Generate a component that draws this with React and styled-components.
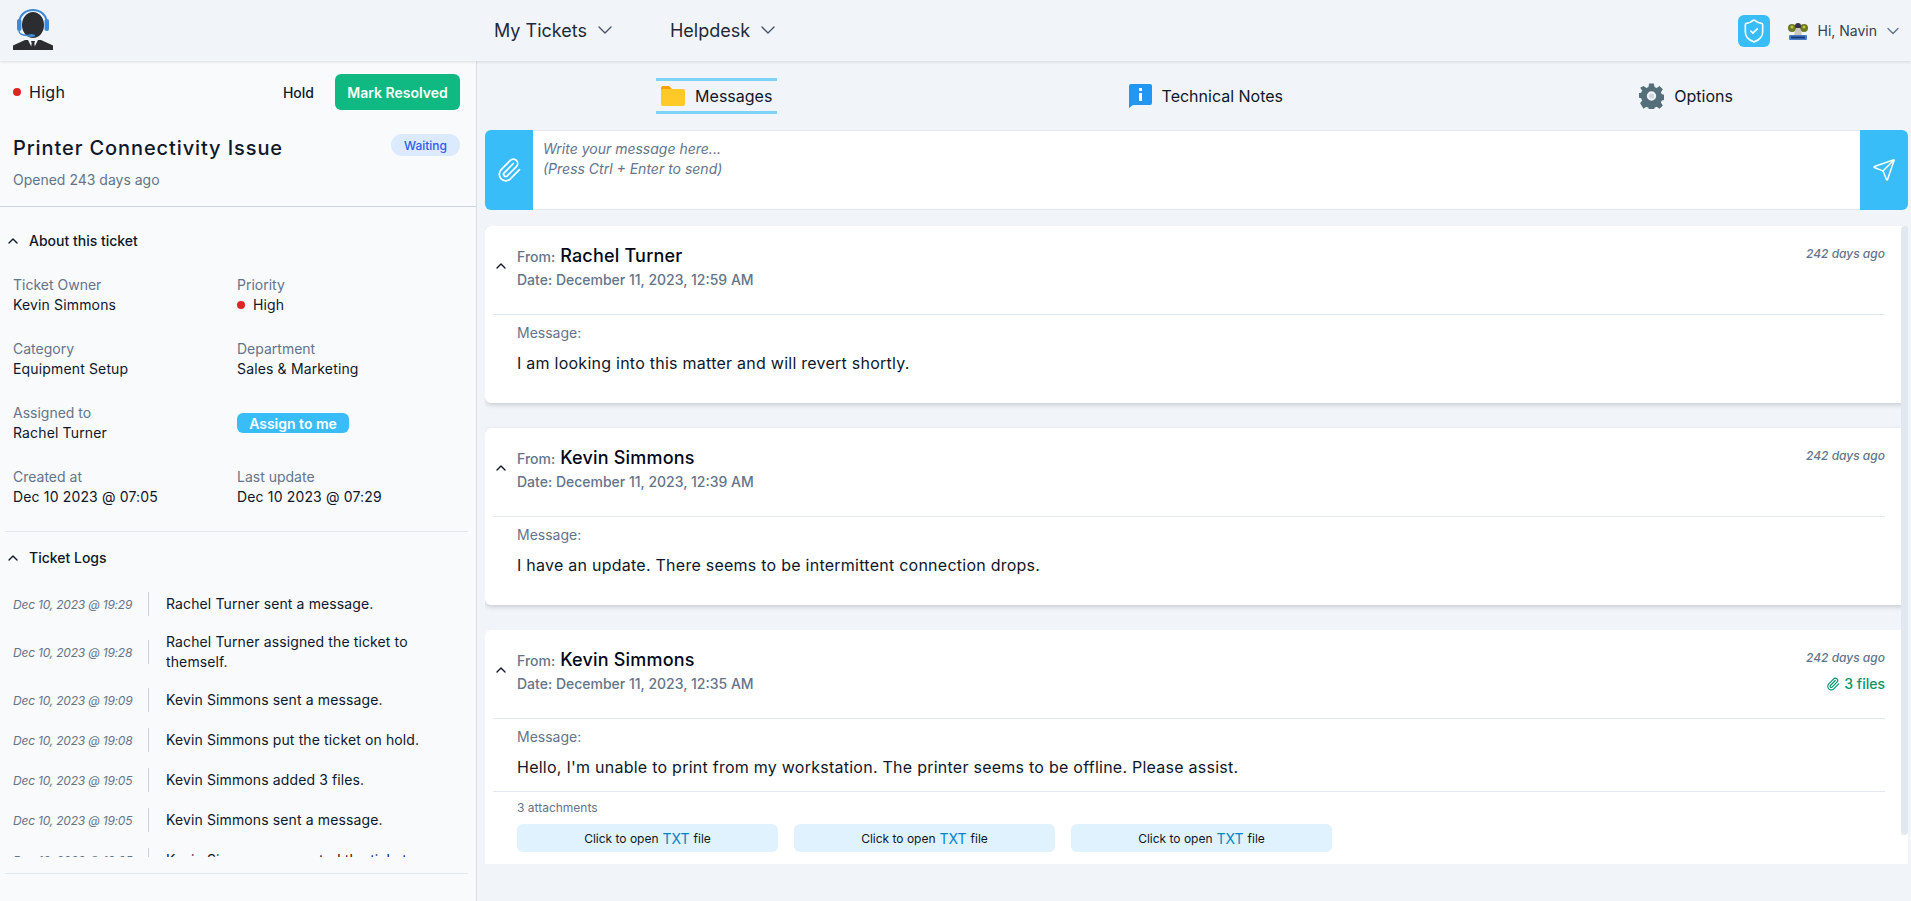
import React from 'react'
import styled, {createGlobalStyle} from 'styled-components'
import {ChevronDown, ChevronUp, Paperclip, Send, ShieldCheck} from 'lucide-react'

const details = [
  {label: 'Ticket Owner', value: 'Kevin Simmons'},
  {label: 'Priority', value: 'High', dot: true},
  {label: 'Category', value: 'Equipment Setup'},
  {label: 'Department', value: 'Sales & Marketing'},
  {label: 'Assigned to', value: 'Rachel Turner'},
  {assign: true},
  {label: 'Created at', value: 'Dec 10 2023 @ 07:05'},
  {label: 'Last update', value: 'Dec 10 2023 @ 07:29'},
]

const logs = [
  {date: 'Dec 10, 2023 @ 19:29', text: 'Rachel Turner sent a message.'},
  {date: 'Dec 10, 2023 @ 19:28', text: 'Rachel Turner assigned the ticket to themself.'},
  {date: 'Dec 10, 2023 @ 19:09', text: 'Kevin Simmons sent a message.'},
  {date: 'Dec 10, 2023 @ 19:08', text: 'Kevin Simmons put the ticket on hold.'},
  {date: 'Dec 10, 2023 @ 19:05', text: 'Kevin Simmons added 3 files.'},
  {date: 'Dec 10, 2023 @ 19:05', text: 'Kevin Simmons sent a message.'},
  {date: 'Dec 10, 2023 @ 19:05', text: 'Kevin Simmons requested the ticket.'},
]

const messages = [
  {from: 'Rachel Turner', date: 'December 11, 2023, 12:59 AM', body: 'I am looking into this matter and will revert shortly.'},
  {from: 'Kevin Simmons', date: 'December 11, 2023, 12:39 AM', body: 'I have an update. There seems to be intermittent connection drops.'},
  {
    from: 'Kevin Simmons',
    date: 'December 11, 2023, 12:35 AM',
    body: "Hello, I'm unable to print from my workstation. The printer seems to be offline. Please assist.",
    files: 3,
  },
]

const Logo = () => (
  <svg width='40' height='41' viewBox='0 0 40 41'>
    <path d='M0 41v-4.500l12-5.500h16l12 5.500V41z' fill='#2b2d30' />
    <path d='M15 31h10l-5 10z' fill='#f1f5f9' />
    <path d='M18 32h4l-.700 2.500 1.200 6.500h-5l1.200-6.500z' fill='#2b2d30' />
    <ellipse cx='20' cy='16' rx='11' ry='13' fill='#2b2d30' />
    <path d='M6.500 16V13C6.500 6 12.500 1 20 1s13.500 5 13.500 12v3' fill='none' stroke='#3f8ad8' strokeWidth='2' />
    <rect x='4' y='10' width='4.500' height='12' rx='2' fill='#3f8ad8' />
    <rect x='31.500' y='10' width='4.500' height='12' rx='2' fill='#3f8ad8' />
    <path d='M6 22c0 3.500 4 4.500 10 4.500' fill='none' stroke='#3f8ad8' strokeWidth='1.500' />
    <ellipse cx='18.500' cy='26.500' rx='3.500' ry='1.600' fill='#3f8ad8' />
  </svg>
)

const Avatar = () => (
  <svg width='20' height='20' viewBox='0 0 20 20'>
    <circle cx='4' cy='7' r='4' fill='#6b7a2a' />
    <circle cx='16' cy='7' r='4' fill='#6b7a2a' />
    <circle cx='10' cy='5' r='3' fill='#3a3342' />
    <path d='M8 7h4l2 7H6z' fill='#c9c7b8' />
    <circle cx='4' cy='6' r='1.500' fill='#c3c62f' />
    <circle cx='16' cy='6' r='1.500' fill='#c3c62f' />
    <rect x='1' y='14' width='18' height='5' rx='1' fill='#4a7cc9' />
    <rect x='3' y='15.500' width='14' height='2' fill='#173a78' />
  </svg>
)

const FolderIcon = () => (
  <svg width='24' height='20' viewBox='0 0 24 20'>
    <path d='M2 0h6l3 3v4H0V2a2 2 0 0 1 2-2z' fill='#ffa000' />
    <rect x='0' y='3' width='24' height='17' rx='2' fill='#ffca28' />
  </svg>
)

const NoteIcon = () => (
  <svg width='23' height='24' viewBox='0 0 23 24'>
    <path d='M2 0h19a2 2 0 0 1 2 2v17a2 2 0 0 1-2 2H4l-4 3V2a2 2 0 0 1 2-2z' fill='#2196f3' />
    <rect x='10' y='4' width='3' height='3' fill='#fff' />
    <rect x='10' y='9' width='3' height='8' fill='#fff' />
  </svg>
)

const GearIcon = () => (
  <svg width='25' height='26' viewBox='0 0 24 24'>
    <path
      fill='#546e7a'
      fillRule='evenodd'
      d='M9.700 0h4.600l.6 3.300 2 .9 2.800-1.900 3.200 3.300-1.900 2.800.9 2 3.100.6v4.600l-3.100.6-.9 2 1.900 2.800-3.200 3.300-2.800-1.900-2 .9-.6 3.100H9.700l-.6-3.100-2-.9-2.800 1.900L1.100 19l1.900-2.800-.9-2L-1 13.600V9.400l3.100-.6.9-2L1.100 4l3.200-1.700 2.800 1.900 2-.9zM12 7.500a4.500 4.500 0 1 0 0 9 4.500 4.500 0 0 0 0-9z'
    />
    <circle cx='12' cy='12' r='2.500' fill='#90a4ae' opacity='.35' />
  </svg>
)

const MessageCard = ({message}) => (
  <Card $clipped={!!message.files}>
    <CardHead>
      <ChevronUp size={16} color='#0f172a' />
      <Sender>
        <FromLine>
          <FromLabel>From:</FromLabel>
          <FromName>{message.from}</FromName>
        </FromLine>
        <DateLine>Date: {message.date}</DateLine>
      </Sender>
      <CardMeta>
        <TimeAgo>242 days ago</TimeAgo>
        {message.files && (
          <FileCount>
            <Paperclip size={14} />
            {message.files} files
          </FileCount>
        )}
      </CardMeta>
    </CardHead>
    <CardRule />
    <CardBody>
      <FieldLabel>Message:</FieldLabel>
      <BodyText>{message.body}</BodyText>
    </CardBody>
    {message.files && (
      <>
        <AttachRule />
        <Attachments>
          <AttachCount>{message.files} attachments</AttachCount>
          <AttachRow>
            {[...Array(message.files).keys()].map(i => (
              <AttachButton key={i}>
                Click to open <em>TXT</em> file
              </AttachButton>
            ))}
          </AttachRow>
        </Attachments>
      </>
    )}
  </Card>
)

export default function App() {
  return (
    <>
      <Global />
      <Page>
        <Header>
          <LogoCell>
            <Logo />
          </LogoCell>
          <Nav>
            <NavItem>
              My Tickets <ChevronDown size={24} color='#475569' strokeWidth={1.4} />
            </NavItem>
            <NavItem>
              Helpdesk <ChevronDown size={24} color='#475569' strokeWidth={1.4} />
            </NavItem>
          </Nav>
          <UserArea>
            <ShieldButton>
              <ShieldCheck size={26} color='#fff' strokeWidth={1.5} />
            </ShieldButton>
            <Avatar />
            <Greeting>Hi, Navin</Greeting>
            <ChevronDown size={20} color='#64748b' strokeWidth={1.6} />
          </UserArea>
        </Header>
        <Columns>
          <Sidebar>
            <Summary>
              <ActionRow>
                <Dot />
                <Priority>High</Priority>
                <HoldButton>Hold</HoldButton>
                <ResolveButton>Mark Resolved</ResolveButton>
              </ActionRow>
              <TitleRow>
                <Title>Printer Connectivity Issue</Title>
                <StatusBadge>Waiting</StatusBadge>
              </TitleRow>
              <Opened>Opened 243 days ago</Opened>
            </Summary>
            <SectionHead>
              <ChevronUp size={16} color='#0f172a' />
              About this ticket
            </SectionHead>
            <DetailGrid>
              {details.map((d, i) =>
                d.assign ? (
                  <AssignButton key={i}>Assign to me</AssignButton>
                ) : (
                  <div key={i}>
                    <FieldLabel>{d.label}</FieldLabel>
                    <FieldValue>
                      {d.dot && <SmallDot />}
                      {d.value}
                    </FieldValue>
                  </div>
                ),
              )}
            </DetailGrid>
            <SideRule />
            <SectionHead $tight>
              <ChevronUp size={16} color='#0f172a' />
              Ticket Logs
            </SectionHead>
            <LogList>
              {logs.map((log, i) => (
                <LogRow key={i}>
                  <LogDate>{log.date}</LogDate>
                  <LogText>{log.text}</LogText>
                </LogRow>
              ))}
            </LogList>
            <SideRule $flush />
          </Sidebar>
          <Main>
            <Tabs>
              <Tab $active>
                <FolderIcon />
                Messages
              </Tab>
              <Tab>
                <NoteIcon />
                Technical Notes
              </Tab>
              <Tab>
                <GearIcon />
                Options
              </Tab>
            </Tabs>
            <Composer>
              <ComposerButton $side='left'>
                <Paperclip size={26} color='#fff' strokeWidth={1.6} />
              </ComposerButton>
              <ComposerText>
                Write your message here...
                <br />
                (Press Ctrl + Enter to send)
              </ComposerText>
              <ComposerButton $side='right'>
                <Send size={24} color='#fff' strokeWidth={1.5} />
              </ComposerButton>
            </Composer>
            <MessageList>
              {messages.map((m, i) => (
                <MessageCard key={i} message={m} />
              ))}
              <ScrollThumb />
            </MessageList>
          </Main>
        </Columns>
      </Page>
    </>
  )
}

const Global = createGlobalStyle`
  html, body { margin: 0; padding: 0; }
  body {
    font-family: Inter, "Noto Sans", sans-serif;
    color: #0f172a;
    background: #f1f5f9;
    overflow: hidden;
  }
  * { box-sizing: border-box; }
`

const Page = styled.div`
  height: 901px;
  display: flex;
  flex-direction: column;
  overflow: hidden;
`

const Header = styled.header`
  height: 61px;
  flex: none;
  display: flex;
  align-items: center;
  background: #f1f5f9;
  box-shadow: 0 1px 3px rgba(15, 23, 42, 0.12);
  position: relative;
  z-index: 2;
`

const LogoCell = styled.div`
  width: 494px;
  padding: 0 0 2px 13px;
  display: flex;
`

const Nav = styled.nav`
  display: flex;
  gap: 53px;
  padding-bottom: 1px;
`

const NavItem = styled.div`
  display: flex;
  align-items: center;
  gap: 6px;
  font-size: 18px;
  color: #1e293b;
`

const UserArea = styled.div`
  margin-left: auto;
  padding-right: 8px;
  display: flex;
  align-items: center;
`

const ShieldButton = styled.div`
  width: 32px;
  height: 32px;
  margin-right: 18px;
  border-radius: 6px;
  background: #38bdf8;
  display: flex;
  align-items: center;
  justify-content: center;
`

const Greeting = styled.span`
  margin: 0 6px 0 10px;
  font-size: 14px;
  color: #334155;
`

const Columns = styled.div`
  flex: 1;
  display: flex;
  min-height: 0;
`

const Sidebar = styled.aside`
  width: 477px;
  flex: none;
  background: #f8fafc;
  border-right: 1px solid #d9dee6;
`

const Summary = styled.div`
  padding: 13px 16px 16px 13px;
  border-bottom: 1px solid #cbd5e1;
`

const ActionRow = styled.div`
  display: flex;
  align-items: center;
  height: 36px;
`

const Dot = styled.span`
  width: 8px;
  height: 8px;
  border-radius: 50%;
  background: #dc2626;
  margin-right: 8px;
`

const Priority = styled.span`
  font-size: 16px;
  letter-spacing: 0.3px;
  margin-right: auto;
`

const HoldButton = styled.span`
  font-size: 14px;
  font-weight: 500;
  margin-right: 21px;
  color: #0f172a;
`

const ResolveButton = styled.span`
  width: 125px;
  height: 36px;
  border-radius: 6px;
  background: #10b981;
  color: #fff;
  font-size: 14px;
  font-weight: 600;
  display: flex;
  align-items: center;
  justify-content: center;
`

const TitleRow = styled.div`
  display: flex;
  justify-content: space-between;
  align-items: flex-start;
  margin-top: 24px;
`

const Title = styled.h1`
  margin: 0;
  font-size: 20px;
  line-height: 28px;
  font-weight: 500;
  letter-spacing: 0.9px;
`

const StatusBadge = styled.span`
  width: 69px;
  height: 22px;
  border-radius: 11px;
  background: #dbeafe;
  color: #2f5bea;
  font-size: 12px;
  font-weight: 500;
  display: flex;
  align-items: center;
  justify-content: center;
`

const Opened = styled.div`
  margin-top: 8px;
  font-size: 14px;
  line-height: 20px;
  color: #64748b;
`

const SectionHead = styled.div`
  margin-top: ${props => (props.$tight ? '16px' : '24px')};
  padding-left: 5px;
  display: flex;
  align-items: center;
  gap: 8px;
  font-size: 14px;
  line-height: 20px;
  font-weight: 500;
`

const DetailGrid = styled.div`
  margin-top: 24px;
  padding-left: 13px;
  display: grid;
  grid-template-columns: 224px 1fr;
  row-gap: 24px;
`

const FieldLabel = styled.div`
  font-size: 14px;
  line-height: 20px;
  color: #64748b;
`

const FieldValue = styled.div`
  display: flex;
  align-items: center;
  font-size: 14px;
  line-height: 20px;
  letter-spacing: 0.15px;
`

const SmallDot = styled(Dot)`
  margin-right: 8px;
`

const AssignButton = styled.span`
  align-self: center;
  width: 112px;
  height: 20px;
  border-radius: 6px;
  background: #38bdf8;
  color: #fff;
  font-size: 14px;
  font-weight: 600;
  display: flex;
  align-items: center;
  justify-content: center;
`

const SideRule = styled.div`
  margin: ${props => (props.$flush ? '16px 8px 0 5px' : '24px 8px 0 5px')};
  height: 1px;
  background: #e2e8f0;
`

const LogList = styled.div`
  margin-top: 24px;
  height: 265px;
  overflow: hidden;
  padding: 0 30px 0 13px;
  display: flex;
  flex-direction: column;
  gap: 16px;
`

const LogRow = styled.div`
  display: flex;
  align-items: center;
  flex: none;
`

const LogDate = styled.span`
  width: 136px;
  height: 24px;
  flex: none;
  display: flex;
  align-items: center;
  font-size: 12px;
  font-style: italic;
  letter-spacing: -0.2px;
  color: #64748b;
  border-right: 1px solid #cbd5e1;
`

const LogText = styled.span`
  padding-left: 17px;
  font-size: 14px;
  line-height: 20px;
  letter-spacing: 0.12px;
`

const Main = styled.main`
  flex: 1;
  min-width: 0;
  padding: 17px 3px 0 8px;
`

const Tabs = styled.div`
  display: flex;
  justify-content: space-around;
  margin: 0 -3px 16px -8px;
  padding-left: 6px;
`

const Tab = styled.div`
  height: 36px;
  padding: 0 5px;
  display: flex;
  align-items: center;
  gap: 10px;
  font-size: 16px;
  border-top: 3px solid ${props => (props.$active ? '#7dd3f5' : 'transparent')};
  border-bottom: 3px solid ${props => (props.$active ? '#7dd3f5' : 'transparent')};
`

const Composer = styled.div`
  height: 80px;
  display: flex;
  background: #fff;
  border-top: 1px solid #e2e8f0;
  border-bottom: 1px solid #e2e8f0;
  border-radius: 6px;
`

const ComposerButton = styled.div`
  width: 48px;
  flex: none;
  margin: -1px 0;
  background: #38bdf8;
  display: flex;
  align-items: center;
  justify-content: center;
  border-radius: ${props => (props.$side === 'left' ? '6px 0 0 6px' : '0 6px 6px 0')};
`

const ComposerText = styled.div`
  flex: 1;
  padding: 8px 10px;
  font-size: 14px;
  line-height: 20px;
  font-style: italic;
  color: #64748b;
`

const MessageList = styled.div`
  position: relative;
  margin-top: 16px;
  height: 638px;
  overflow: hidden;
  display: flex;
  flex-direction: column;
  gap: 25px;
  padding-bottom: 8px;
`

const ScrollThumb = styled.div`
  position: absolute;
  top: 0;
  right: 0;
  width: 7px;
  height: 609px;
  border-radius: 4px;
  background: #e2e8f0;
`

const Card = styled.article`
  flex: none;
  background: #fff;
  border-radius: ${props => (props.$clipped ? '6px 6px 0 0' : '6px')};
  padding-bottom: ${props => (props.$clipped ? '12px' : '28px')};
  box-shadow: ${props => (props.$clipped ? 'none' : '0 2px 5px rgba(15, 23, 42, 0.18)')};
`

const CardHead = styled.div`
  position: relative;
  display: flex;
  align-items: center;
  padding: 16px 23px 24px 8px;
  gap: 8px;
`

const Sender = styled.div`
  flex: 1;
`

const FromLine = styled.div`
  display: flex;
  align-items: baseline;
  gap: 5px;
  height: 28px;
  line-height: 28px;
`

const FromLabel = styled.span`
  font-size: 14px;
  font-weight: 500;
  color: #64748b;
`

const FromName = styled.span`
  font-size: 18px;
  font-weight: 500;
  letter-spacing: 0.2px;
  color: #020617;
`

const DateLine = styled.div`
  font-size: 14px;
  line-height: 20px;
  font-weight: 500;
  color: #64748b;
`

const CardMeta = styled.div`
  position: absolute;
  top: 20px;
  right: 23px;
  display: flex;
  flex-direction: column;
  align-items: flex-end;
  gap: 8px;
`

const TimeAgo = styled.span`
  font-size: 12px;
  line-height: 16px;
  font-style: italic;
  font-weight: 500;
  color: #64748b;
`

const FileCount = styled.span`
  display: flex;
  align-items: center;
  gap: 4px;
  font-size: 14px;
  line-height: 20px;
  font-weight: 500;
  color: #059669;
`

const CardRule = styled.div`
  height: 1px;
  margin: 0 23px 0 8px;
  background: #e2e8f0;
`

const AttachRule = styled(CardRule)`
  margin-top: 12px;
`

const CardBody = styled.div`
  padding: 8px 24px 0 32px;
`

const BodyText = styled.p`
  margin: 8px 0 0;
  font-size: 16px;
  line-height: 24px;
  letter-spacing: 0.25px;
`

const Attachments = styled.div`
  padding: 8px 0 0 32px;
`

const AttachCount = styled.div`
  font-size: 12px;
  line-height: 16px;
  color: #64748b;
`

const AttachRow = styled.div`
  margin-top: 8px;
  display: flex;
  gap: 16px;
`

const AttachButton = styled.div`
  width: 261px;
  height: 28px;
  border-radius: 6px;
  background: #e0f2fe;
  font-size: 12px;
  display: flex;
  align-items: center;
  justify-content: center;
  gap: 4px;
  em {
    font-style: normal;
    font-size: 14px;
    color: #0284c7;
  }
`
